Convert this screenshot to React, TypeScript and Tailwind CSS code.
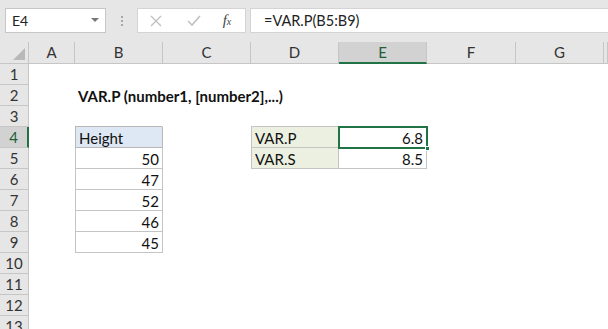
import React from 'react';

const cols = ['A', 'B', 'C', 'D', 'E', 'F', 'G', ''];
const rows = Array.from({ length: 13 }, (_, i) => i + 1);

type Cell = { text?: string; bold?: boolean; right?: boolean; cls?: string };

// sheet content keyed by "row-col"; gridlines are off, only the tables get borders
const cells: Record<string, Cell> = {
  '2-B': { text: 'VAR.P (number1, [number2],...)', bold: true },
  '4-B': { text: 'Height', cls: 'bg-[#dde8f4] border-[#b8b8b8] border-l' },
  '5-B': { text: '50', right: true, cls: 'border-[#c4c4c4] border-l' },
  '6-B': { text: '47', right: true, cls: 'border-[#c4c4c4] border-l' },
  '7-B': { text: '52', right: true, cls: 'border-[#c4c4c4] border-l' },
  '8-B': { text: '46', right: true, cls: 'border-[#c4c4c4] border-l' },
  '9-B': { text: '45', right: true, cls: 'border-[#c4c4c4] border-l' },
  '4-D': { text: 'VAR.P', cls: 'bg-[#ebf0e1] border-[#c4c4c4] border-l' },
  '5-D': { text: 'VAR.S', cls: 'bg-[#ebf0e1] border-[#c4c4c4] border-l' },
  '4-E': { text: '6.8', right: true, cls: 'border-[#c4c4c4]' },
  '5-E': { text: '8.5', right: true, cls: 'border-[#c4c4c4]' },
};

const topBorder: Record<string, string> = {
  '3-B': 'border-b-[#b8b8b8]',
  '3-D': 'border-b-[#c4c4c4]',
  '3-E': 'border-b-[#c4c4c4]',
};

function FormulaBar() {
  return (
    <div className="h-[42px] bg-[#e6e6e6] flex items-start pt-[8px] pl-[5px]">
      <div className="w-[101px] h-[25px] bg-white border border-[#c6c6c6] flex items-center justify-between pl-[6px] pr-[6px]">
        <span className="text-[14px] text-[#222]">E4</span>
        <svg width="8" height="5" viewBox="0 0 8 5"><path d="M0 0 L8 0 L4 4 Z" fill="#777" /></svg>
      </div>
      <div className="w-[31px] h-[25px] flex flex-col items-center justify-center gap-[2px]">
        <div className="w-[2px] h-[2px] bg-[#a8a8a8]" />
        <div className="w-[2px] h-[2px] bg-[#a8a8a8]" />
        <div className="w-[2px] h-[2px] bg-[#a8a8a8]" />
      </div>
      <div className="w-[109px] h-[25px] bg-white border border-[#d4d4d4] flex items-center">
        <div className="w-[36px] flex justify-center">
          <svg width="12" height="12" viewBox="0 0 12 12"><path d="M1 1 L11 11 M11 1 L1 11" stroke="#c0c0c0" strokeWidth="1.4" /></svg>
        </div>
        <div className="w-[39px] flex justify-center">
          <svg width="14" height="12" viewBox="0 0 14 12"><path d="M1 6 L5 10 L13 1" stroke="#c0c0c0" strokeWidth="1.6" fill="none" /></svg>
        </div>
        <div className="flex-1 flex justify-center pr-[4px]">
          <span className="text-[15px] italic text-[#444] font-['Liberation_Serif',serif]">f<span className="text-[10px]">x</span></span>
        </div>
      </div>
      <div className="ml-[4px] flex-1 h-[25px] bg-white border border-[#d4d4d4] border-r-0 flex items-center pl-[13px]">
        <span className="text-[14.5px] text-[#222]">=VAR.P(B5:B9)</span>
      </div>
    </div>
  );
}

export default function App() {
  return (
    <div className="w-[608px] h-[329px] overflow-hidden bg-white font-['Lato','Liberation_Sans',sans-serif]">
      <FormulaBar />
      <div className="relative grid grid-cols-[29px_46px_88px_88px_88px_88px_89px_88px_1fr] grid-rows-[22px_repeat(13,21px)]">
        {/* header row */}
        <div className="bg-[#e6e6e6] border-r border-b border-[#c6c6c6] relative">
          <svg className="absolute right-[3px] bottom-[3px]" width="12" height="12" viewBox="0 0 12 12"><path d="M12 0 L12 12 L0 12 Z" fill="#b8b8b8" /></svg>
        </div>
        {cols.map((c, i) => (
          <div
            key={i}
            className={`flex items-center justify-center text-[15px] border-r ${
              c === 'E'
                ? 'bg-[#d2d2d2] text-[#1d5e3a] border-b-2 border-b-[#217346] border-r-[#c6c6c6]'
                : 'bg-[#e6e6e6] text-[#333] border-b border-[#c6c6c6]'
            }`}
          >
            {c}
          </div>
        ))}
        {rows.map(r => (
          <React.Fragment key={r}>
            <div
              className={`flex items-center justify-center text-[15px] border-b ${
                r === 4
                  ? 'bg-[#d2d2d2] text-[#1d5e3a] border-r-2 border-r-[#217346] border-b-[#c6c6c6]'
                  : 'bg-[#e6e6e6] text-[#333] border-r border-[#c6c6c6]'
              }`}
            >
              {r}
            </div>
            {cols.map((c, i) => {
              const cell = cells[`${r}-${c}`];
              const tb = topBorder[`${r}-${c}`];
              return (
                <div
                  key={i}
                  className={`relative flex items-end text-[15px] text-[#111] whitespace-nowrap border-r border-b ${
                    cell?.cls ? '' : 'border-transparent'
                  } ${cell?.right ? 'justify-end pr-[3px]' : 'pl-[3px]'} ${cell?.cls ?? ''} ${tb ?? ''}`}
                >
                  {cell?.text && (
                    <span className={`${cell.bold ? 'font-bold' : ''} leading-[18px]`}>{cell.text}</span>
                  )}
                </div>
              );
            })}
          </React.Fragment>
        ))}
        {/* active cell E4 */}
        <div className="absolute left-[338px] top-[84px] w-[90px] h-[23px] border-2 border-[#217346] pointer-events-none">
          <div className="absolute right-[-4px] bottom-[-4px] w-[5px] h-[5px] bg-[#217346] border border-white" />
        </div>
      </div>
    </div>
  );
}
